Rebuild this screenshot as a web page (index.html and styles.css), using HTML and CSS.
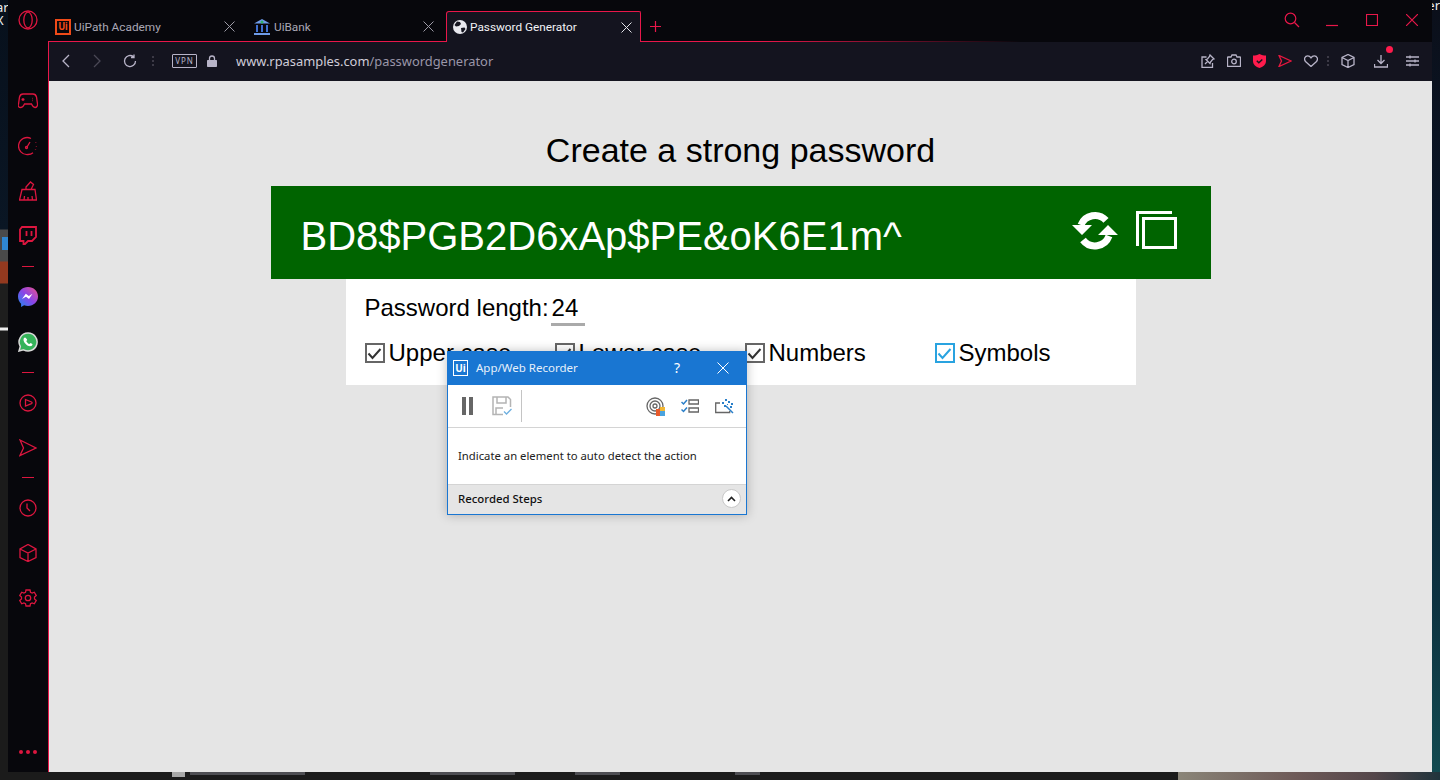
FILE: index.html
```html
<!DOCTYPE html>
<html>
<head>
    <title>Password Generator</title>
    <link rel="stylesheet" href="styles.css">
</head>
<body>
    <span class="desk-text desk-left">ar<br>X</span>
    <span class="desk-text desk-right">er</span>
    <i class="desk-tile"></i>

    <div class="window">
        <div class="side">
            <div class="side-logo">
                <svg width="20" height="20" viewBox="0 0 20 20" fill="none" stroke="#e8173f" stroke-width="1.300"><circle cx="10" cy="10" r="9"/><ellipse cx="10" cy="10" rx="4.200" ry="7.800"/></svg>
            </div>
            <div class="side-item"><svg width="20" height="16" viewBox="0 0 20 16"><path d="M5 1h10c2 0 3 1 3.500 3l1 7c.3 2-1 3.500-2.500 3.500-1.500 0-2.500-1.500-3.500-3.500H6.500C5.500 13 4.500 14.500 3 14.500.5 14.500-.3 13 .5 11l1-7C2 2 3 1 5 1z"/><path d="M5 5v3M3.500 6.500h3M14 5.500h.5M14 7.500h.5"/></svg></div>
            <div class="side-item"><svg width="20" height="20" viewBox="0 0 20 20"><path d="M13 2.500A8.500 8.500 0 1 0 10 18.500c2 0 3.500-.5 5-1.700"/><path d="M9 11l3-5M18.400 10v.5M17.800 6.500v.5M17.500 13v.5"/><circle cx="8.500" cy="11.500" r="1"/></svg></div>
            <div class="side-item"><svg width="18" height="20" viewBox="0 0 18 20"><path d="M3 8.500h13l1.500 10.500H.5zM7 8.500V6L11.500 1l3 2.500L12 8.500M5 19l.5-4M9 19v-3M13.500 19l-.5-4"/></svg></div>
            <div class="side-item"><svg width="18" height="20" viewBox="0 0 18 20"><path stroke-width="1.800" d="M3 1h14v10l-4 4H9l-3 3H4.500v-3H1V3.500zM7.500 5v5M12.500 5v5"/></svg></div>
            <div class="side-rule"></div>
            <div class="side-item">
                <svg width="20" height="20" viewBox="0 0 20 20"><defs><linearGradient id="msg" x1="0" y1="1" x2="1" y2="0"><stop offset="0" stop-color="#1a8cf0"/><stop offset=".5" stop-color="#8a45e8"/><stop offset="1" stop-color="#f0508a"/></linearGradient></defs><path fill="url(#msg)" stroke="none" d="M10 0C4.400 0 0 4.100 0 9.600c0 2.900 1.200 5.400 3.100 7.100V20l3-1.700c1.200.4 2.500.6 3.900.6 5.600 0 10-4 10-9.400S15.600 0 10 0z"/><path fill="#fff" stroke="none" d="M4 12l3.800-5.200 3 2.300 3.700-2.300L11 12 8 9.800z"/></svg>
            </div>
            <div class="side-item">
                <svg width="20" height="20" viewBox="0 0 20 20"><path fill="#35b35a" stroke="#d8d8d8" stroke-width="1.500" d="M10 1a9 9 0 0 0-7.700 13.500L1 19l4.600-1.200A9 9 0 1 0 10 1z"/><path fill="#fff" stroke="none" d="M7 5.500c-.5 0-1.500.8-1.500 2.300 0 2.800 3.800 6.500 6.500 6.500 1.500 0 2.500-1 2.500-2 0-.3-1.700-1.200-2-1.200s-.8 1-1.200 1c-.8 0-3-2.200-3-3 0-.4.900-.8.900-1.200S7.500 5.500 7 5.500z"/></svg>
            </div>
            <div class="side-rule"></div>
            <div class="side-item"><svg width="18" height="18" viewBox="0 0 18 18"><circle cx="9" cy="9" r="8"/><path d="M6.500 5.500l6 2.500c.8.400.8 1.200 0 1.600l-6 2.400z"/></svg></div>
            <div class="side-item"><svg width="18" height="18" viewBox="0 0 18 18"><path d="M1 1l16 8-16 7.500L4.500 9z"/></svg></div>
            <div class="side-rule side-rule-short"></div>
            <div class="side-item"><svg width="18" height="18" viewBox="0 0 18 18"><circle cx="9" cy="9" r="8"/><path d="M8 4.500V9l3 3"/></svg></div>
            <div class="side-item"><svg width="18" height="18" viewBox="0 0 18 18"><path d="M9 .5l8 4.500v8.500L9 17.500l-8-4V5zM1 5l8 4 8-4M9 9v8.500"/></svg></div>
            <div class="side-item"><svg width="18" height="18" viewBox="0 0 18 18"><path d="M7 1h4l.5 2.300 1.600.8 2.200-.9 2 3.400-1.800 1.500v1.800l1.800 1.500-2 3.400-2.200-.9-1.600.8L11 17H7l-.5-2.300-1.600-.8-2.200.9-2-3.400 1.800-1.500V8.100L.7 6.600l2-3.400 2.200.9 1.600-.8z"/><circle cx="9" cy="9" r="2.700"/></svg></div>
            <div class="side-dots"><i></i><i></i><i></i></div>
        </div>

        <div class="main">
            <div class="tabstrip">
                <div class="tab">
                    <span class="fav-ui">Ui</span>
                    <span class="tab-title">UiPath Academy</span>
                    <svg class="tab-x" width="11" height="11" viewBox="0 0 11 11"><path d="M.5.500l10 10M10.500.500l-10 10"/></svg>
                </div>
                <div class="tab">
                    <svg class="fav" width="18" height="16" viewBox="0 0 18 16"><path fill="#6f9be8" d="M9 0l8 4.500H1zM1 14h16v2H1z"/><path fill="#3f6fd0" d="M3 6h2v7H3zM8 6h2v7H8zM13 6h2v7h-2z"/><circle cx="9" cy="3" r="1.500" fill="#2fb26a"/></svg>
                    <span class="tab-title">UiBank</span>
                    <svg class="tab-x" width="11" height="11" viewBox="0 0 11 11"><path d="M.5.500l10 10M10.500.500l-10 10"/></svg>
                </div>
                <div class="tab tab-active">
                    <svg class="fav" width="14" height="14" viewBox="0 0 14 14"><circle cx="7" cy="7" r="7" fill="#e8e8ee"/><path fill="#14141f" d="M4 1.500l3 .5 1 2-2 2-3 .5-1.500-1.500zM8 8l3.500-.5 1 1.500-2.500 3.500-1.500-.5z"/></svg>
                    <span class="tab-title">Password Generator</span>
                    <svg class="tab-x" width="11" height="11" viewBox="0 0 11 11"><path d="M.5.500l10 10M10.500.500l-10 10"/></svg>
                </div>
                <div class="strip-rest">
                    <svg class="tab-plus" width="11" height="11" viewBox="0 0 11 11"><path d="M5.500 0v11M0 5.500h11"/></svg>
                    <div class="win-controls">
                        <div class="win-btn"><svg width="16" height="16" viewBox="0 0 16 16"><circle cx="6.500" cy="6.500" r="5.300"/><path d="M10.500 10.500L15 15"/></svg></div>
                        <div class="win-btn"><svg width="12" height="16" viewBox="0 0 12 16"><path d="M0 13.500h12"/></svg></div>
                        <div class="win-btn"><svg width="12" height="12" viewBox="0 0 12 12"><path d="M.5.500h11v11H.5z"/></svg></div>
                        <div class="win-btn"><svg width="12" height="12" viewBox="0 0 12 12"><path d="M0 0l12 12M12 0L0 12"/></svg></div>
                    </div>
                </div>
            </div>

            <div class="toolbar">
                <svg class="nav-back" width="9" height="14" viewBox="0 0 9 14"><path d="M8 1L2 7l6 6"/></svg>
                <svg class="nav-forward" width="9" height="14" viewBox="0 0 9 14"><path d="M1 1l6 6-6 6"/></svg>
                <svg class="nav-reload" width="14" height="14" viewBox="0 0 14 14"><path d="M12.500 7A5.500 5.500 0 1 1 10.500 2.800M11 .5v3H8"/></svg>
                <span class="tool-dots"><i></i><i></i><i></i></span>
                <span class="vpn">VPN</span>
                <svg class="lock" width="10" height="12" viewBox="0 0 10 12"><path class="solid" d="M1 5h8c.6 0 1 .4 1 1v5c0 .6-.4 1-1 1H1c-.6 0-1-.4-1-1V6c0-.6.4-1 1-1z"/><path d="M2.500 5V3.500a2.500 2.500 0 0 1 5 0V5"/></svg>
                <span class="url"><b>www.rpasamples.com</b>/passwordgenerator</span>
                <div class="tool-right">
                    <svg width="14" height="14" viewBox="0 0 14 14"><path d="M5.500 3H1v10.500h10.500V9M9 1l4 4-1.500.5L9.500 8 9 9.500 5 5.500 6.500 5 8.500 2.500zM6.500 7.500L4 10"/></svg>
                    <svg width="14" height="13" viewBox="0 0 14 13"><path d="M1 3h3l1-2h4l1 2h3c.3 0 .5.200.500.500v8.500c0 .3-.2.500-.5.500H1c-.3 0-.5-.2-.5-.5V3.500c0-.3.200-.5.500-.5z"/><circle cx="7" cy="7.500" r="2.300"/></svg>
                    <svg width="13" height="14" viewBox="0 0 13 14"><path fill="#ff1b4c" stroke="none" d="M6.500 0C9 1 10.500 1.500 13 1.500V7c0 3.500-3 6-6.500 7C3 13 0 10.500 0 7V1.500C2.500 1.500 4 1 6.500 0z"/><path stroke="#14141f" stroke-width="1.500" d="M3.800 6.800l2 2 3.500-3.300"/></svg>
                    <svg width="14" height="12" viewBox="0 0 14 12"><path stroke="#e8173f" d="M1 .5l12 5.500-12 5.500L3.500 6z"/></svg>
                    <svg width="14" height="12" viewBox="0 0 14 12"><path d="M7 11.500L1.500 6.500C-.5 4 1 .8 3.700.8 5 .8 6.200 1.500 7 2.800 7.800 1.500 9 .8 10.300.8 13 .8 14.500 4 12.500 6.500z"/></svg>
                    <span class="tool-dots tool-dots-right"><i></i><i></i><i></i></span>
                    <svg width="14" height="14" viewBox="0 0 14 14"><path d="M7 .5l6 3v7l-6 3-6-3v-7zM1 3.500l6 3 6-3M7 6.500v7"/></svg>
                    <span class="tool-dl">
                        <svg width="14" height="14" viewBox="0 0 14 14"><path d="M7 1v8M3.500 6L7 9.500 10.500 6M.5 10v3h13v-3"/></svg>
                        <i class="badge"></i>
                    </span>
                    <svg width="13" height="12" viewBox="0 0 13 12"><path d="M0 2h13M0 6h13M0 10h13M4 .5v3M9 4.500v3M4 8.500v3"/></svg>
                </div>
            </div>

            <div class="content">
                <h1>Create a strong password</h1>
                <div class="password-bar">
                    <span class="password">BD8$PGB2D6xAp$PE&amp;oK6E1m^</span>
                    <svg class="icon-refresh" width="46" height="40" viewBox="0 0 46 40"><path fill="none" stroke="#fff" stroke-width="7" d="M9 14A15 15 0 0 1 34 9.300M37 25A15 15 0 0 1 11 29"/><path fill="#fff" d="M0 14h20L10 24zM26 24h20L36 14z"/></svg>
                    <svg class="icon-copy" width="41" height="38" viewBox="0 0 41 38"><path fill="none" stroke="#fff" stroke-width="3" d="M36 1.500H1.500V35"/><path fill="none" stroke="#fff" stroke-width="3" d="M7.500 7.500h32v29h-32z"/></svg>
                </div>
                <div class="options">
                    <div class="length-row">
                        <span>Password length:</span>
                        <span class="length-value">24</span>
                    </div>
                    <div class="check-row">
                        <label class="check"><span class="box"><svg width="15" height="15" viewBox="0 0 15 15"><path d="M1.500 7.500l4 4.500 8-9"/></svg></span>Upper case</label>
                        <label class="check"><span class="box"><svg width="15" height="15" viewBox="0 0 15 15"><path d="M1.500 7.500l4 4.500 8-9"/></svg></span>Lower case</label>
                        <label class="check"><span class="box"><svg width="15" height="15" viewBox="0 0 15 15"><path d="M1.500 7.500l4 4.500 8-9"/></svg></span>Numbers</label>
                        <label class="check check-focus"><span class="box"><svg width="15" height="15" viewBox="0 0 15 15"><path d="M1.500 7.500l4 4.500 8-9"/></svg></span>Symbols</label>
                    </div>
                </div>

                <div class="recorder">
                    <div class="rec-title">
                        <span class="rec-logo">Ui</span>
                        <span class="rec-name">App/Web Recorder</span>
                        <span class="rec-help">?</span>
                        <svg class="rec-close" width="12" height="12" viewBox="0 0 12 12"><path d="M.5.500l11 11M11.500.500l-11 11"/></svg>
                    </div>
                    <div class="rec-tools">
                        <span class="rec-pause"><i></i><i></i></span>
                        <svg class="rec-save" width="20" height="20" viewBox="0 0 20 20"><path fill="none" stroke="#b4b4b4" stroke-width="1.500" d="M11 18.500H1V1h15l2.500 2.500V11M5 1v6h9V1M4 18.500V12h7"/><path fill="none" stroke="#6fb0e0" stroke-width="1.300" d="M12 15.500l2.500 2.500 5-5"/></svg>
                        <span class="rec-sep"></span>
                        <svg class="rec-target" width="19" height="19" viewBox="0 0 19 19"><circle cx="9" cy="9" r="8" fill="none" stroke="#666" stroke-width="1.300"/><circle cx="9" cy="9" r="5" fill="none" stroke="#666" stroke-width="1.300"/><circle cx="9" cy="9" r="2" fill="none" stroke="#666" stroke-width="1.300"/><path fill="#e85a2a" d="M10 12h4v7h-4z"/><path fill="#f2b632" d="M14 10h5v4h-5z"/><path fill="#4aa3df" d="M14 14h5v5h-5z"/></svg>
                        <svg class="rec-list" width="18" height="14" viewBox="0 0 18 14"><path fill="none" stroke="#2a7fc9" stroke-width="1.500" d="M.5 3l2 2 3.500-4M.5 10.500l2 2 3.500-4"/><path fill="none" stroke="#666" stroke-width="1.300" d="M8 1h9.500v4H8zM8 9h9.500v4H8z"/></svg>
                        <svg class="rec-scan" width="19" height="15" viewBox="0 0 19 15"><path fill="none" stroke="#666" stroke-width="1.300" d="M5 4H.7v9.500h14V12"/><path fill="none" stroke="#2a7fc9" stroke-width="1.500" d="M11 7l7 7"/><path fill="#2a7fc9" d="M7 3h2v2H7zM10 0h2v2h-2zM13 2h2v2h-2zM16 4h2v2h-2zM9 6h2v2H9zM12 5h1v1h-1zM15 7h2v2h-2z"/></svg>
                    </div>
                    <div class="rec-message">Indicate an element to auto detect the action</div>
                    <div class="rec-footer">
                        <span class="rec-steps">Recorded Steps</span>
                        <span class="rec-toggle"><svg width="9" height="6" viewBox="0 0 9 6"><path d="M1 5l3.500-3.500L8 5"/></svg></span>
                    </div>
                </div>
            </div>
        </div>
    </div>

    <div class="taskbar">
        <i class="task-bit task-icon"></i>
        <i class="task-bit task-name"></i>
        <i class="task-bit task-date"></i>
        <i class="task-bit task-type"></i>
        <i class="task-bit task-size"></i>
        <div class="task-photo"></div>
    </div>
</body>
</html>
```

FILE: styles.css
```css
* {
    box-sizing: border-box;
}

body {
    margin: 0;
    height: 780px;
    overflow: hidden;
    padding: 0 8px;
    font-family: 'Liberation Sans', Arial, sans-serif;
    background-color: #1b1b1b;
    background-image:
        linear-gradient(to bottom, #07101c 0, #0a1624 229px, #4a4a4a 230px, #4a4a4a 261px, #93391f 262px, #93391f 283px, #1e1e1e 284px, #1e1e1e 327px, #eee 328px, #eee 330px, #1b1b1b 331px),
        linear-gradient(to bottom, #0b0f1a 0, #0a1a2c 300px, #0d3240 600px, #124a50 772px);
    background-size: 8px 100%, 8px 772px;
    background-position: left top, right top;
    background-repeat: no-repeat;
}

.desk-text {
    position: absolute;
    color: #eee;
    font-family: 'Noto Sans', sans-serif;
    font-size: 13px;
    line-height: 13px;
}

.desk-left {
    left: -4px;
    top: 1px;
}

.desk-right {
    right: 0;
    top: -1px;
}

.desk-tile {
    position: absolute;
    left: 2px;
    top: 237px;
    width: 6px;
    height: 13px;
    background-color: #2f86d0;
}

.window {
    position: relative;
    display: flex;
    height: 772px;
    background-color: #07070c;
    font-family: 'Noto Sans', sans-serif;
}

/* left sidebar */
.side {
    width: 40px;
    flex: none;
    display: flex;
    flex-direction: column;
    align-items: center;
    padding-bottom: 18px;
}

.side svg {
    display: block;
    fill: none;
    stroke: #dc163f;
    stroke-width: 1.3;
}

.side-logo {
    height: 41px;
    padding-top: 10px;
    margin-bottom: 37px;
}

.side-item {
    height: 45px;
    flex: none;
    display: flex;
    align-items: center;
    justify-content: center;
}

.side-rule {
    flex: none;
    width: 12px;
    height: 16px;
    background: linear-gradient(#dc163f, #dc163f) center / 12px 1px no-repeat;
}

.side-rule-short {
    height: 15px;
}

.side-dots {
    margin-top: auto;
    display: flex;
    gap: 3px;
}

.side-dots i {
    width: 4px;
    height: 4px;
    border-radius: 50%;
    background-color: #dc163f;
}

.main {
    flex: 1;
    min-width: 0;
    display: flex;
    flex-direction: column;
}

/* tabs */
.tab {
    width: 199px;
    height: 31px;
    padding: 0 12px 0 7px;
    display: flex;
    align-items: center;
    border-top: 1px solid transparent;
    border-bottom: 1px solid #e8174a;
    color: #aaa7b5;
    font-family: Roboto, sans-serif;
    font-size: 11.8px;
}

.tabstrip {
    height: 42px;
    flex: none;
    display: flex;
    align-items: flex-end;
}

.tab:nth-child(2) {
    padding-left: 6px;
}

.tab-active {
    width: 195px;
    padding: 0 8px 0 6px;
    background-color: #14141f;
    border: 1px solid #e8174a;
    border-bottom: none;
    border-radius: 3px 2px 0 0;
    color: #f2f2f6;
}

.fav-ui {
    width: 16px;
    height: 16px;
    flex: none;
    border: 2px solid #f04a18;
    color: #f04a18;
    font-size: 10px;
    font-weight: 700;
    line-height: 12px;
    text-align: center;
}

.fav {
    flex: none;
}

.tab-title {
    margin-left: 3px;
    white-space: nowrap;
}

.tab-active .tab-title {
    margin-left: 3px;
}

.tab-x {
    margin-left: auto;
    flex: none;
    stroke: #9c9aa6;
    stroke-width: 1;
}

.tab-active .tab-x {
    stroke: #e4e4ea;
}

.strip-rest {
    flex: 1;
    align-self: stretch;
    display: flex;
    background: linear-gradient(to right, #e8174a 0, #e8174a 120px, rgba(232, 23, 74, 0) 380px) left bottom / 100% 1px no-repeat;
}

.tab-plus {
    margin: 21px 0 0 9px;
    stroke: #e8174a;
    stroke-width: 1.2;
}

.win-controls {
    margin-left: auto;
    display: flex;
    height: 40px;
}

.win-btn {
    width: 40px;
    display: flex;
    align-items: center;
    justify-content: center;
}

.win-btn svg {
    fill: none;
    stroke: #e8174a;
    stroke-width: 1.2;
}

/* address bar */
.toolbar {
    height: 39px;
    flex: none;
    display: flex;
    align-items: center;
    background-color: #14141f;
    border-left: 1px solid #e8174a;
    padding: 0 13px 2px 0;
}

.toolbar svg {
    flex: none;
    fill: none;
    stroke: #b8b4c8;
    stroke-width: 1.3;
}

.toolbar svg .solid {
    fill: #b8b4c8;
    stroke: none;
}

.nav-back {
    margin-left: 12px;
}

.toolbar .nav-forward {
    margin-left: 23px;
    stroke: #4a4855;
}

.nav-reload {
    margin-left: 21px;
}

.tool-dots {
    display: flex;
    flex-direction: column;
    gap: 2px;
    margin-left: 15px;
}

.tool-dots i {
    width: 2px;
    height: 2px;
    background-color: #3c3a46;
}

.tool-dots-right {
    margin: 0 0 0 -3px;
}

.vpn {
    margin-left: 18px;
    width: 25px;
    height: 14px;
    border: 1px solid #b8b4c8;
    border-radius: 1px;
    color: #b8b4c8;
    font-size: 8px;
    letter-spacing: 1px;
    line-height: 12px;
    text-align: center;
}

.lock {
    margin-left: 10px;
}

.url {
    margin-left: 19px;
    color: #9a96a8;
    font-size: 12.9px;
    white-space: nowrap;
}

.url b {
    font-weight: 400;
    color: #cfccd8;
}

.tool-right {
    margin-left: auto;
    display: flex;
    align-items: center;
    gap: 12px;
}

.tool-dl {
    position: relative;
    display: flex;
    margin: 0 6px 0 7px;
}

.badge {
    position: absolute;
    right: -5px;
    top: -8px;
    width: 7px;
    height: 7px;
    border-radius: 50%;
    background-color: #ff1b4c;
}

/* page */
.content {
    flex: 1;
    position: relative;
    display: flex;
    flex-direction: column;
    align-items: center;
    padding-top: 48px;
    background-color: #e5e5e5;
    border-left: 1px solid #e8174a;
    font-family: 'Liberation Sans', Arial, sans-serif;
    color: #000;
}

h1 {
    margin: 0 0 15px;
    font-size: 34px;
    font-weight: 400;
    line-height: 42px;
}

.password-bar {
    width: 940px;
    height: 93px;
    flex: none;
    display: flex;
    align-items: center;
    padding: 0 34px 0 30px;
    background-color: #006400;
    color: #fff;
}

.password {
    margin-top: 8px;
    font-size: 40px;
}

.icon-refresh {
    margin-left: auto;
    margin-top: -3px;
}

.icon-copy {
    margin-left: 18px;
    margin-top: -5px;
}

.options {
    width: 790px;
    height: 106px;
    flex: none;
    padding: 14px 0 0 19px;
    background-color: #fff;
    font-size: 24px;
}

.length-row {
    display: flex;
    gap: 2px;
    height: 33px;
    line-height: 29px;
}

.length-value {
    width: 34px;
    height: 33px;
    padding-left: 1px;
    border-bottom: 3px solid #aaa;
}

.check-row {
    display: grid;
    grid-template-columns: repeat(4, 190px);
    margin-top: 13px;
}

.check {
    display: flex;
    align-items: center;
    gap: 4px;
    height: 28px;
    white-space: nowrap;
}

.box {
    width: 20px;
    height: 20px;
    flex: none;
    display: flex;
    align-items: center;
    justify-content: center;
    border: 2px solid #666;
}

.box svg {
    fill: none;
    stroke: #333;
    stroke-width: 2;
}

.check-focus .box {
    border-color: #29a3e0;
}

.check-focus .box svg {
    stroke: #29a3e0;
}

/* recorder popup */
.recorder {
    position: absolute;
    left: 398px;
    top: 270px;
    width: 300px;
    height: 164px;
    display: flex;
    flex-direction: column;
    border: 1px solid #1976d2;
    background-color: #fff;
    box-shadow: 0 0 10px rgba(0, 0, 0, .25);
    font-family: 'Noto Sans', sans-serif;
    font-size: 11.5px;
}

.rec-title {
    height: 33px;
    flex: none;
    display: flex;
    align-items: center;
    padding: 0 17px 2px 5px;
    background-color: #1976d2;
    color: #fff;
}

.rec-logo {
    width: 15px;
    height: 16px;
    flex: none;
    border: 1px solid #fff;
    font-size: 10px;
    font-weight: 700;
    line-height: 14px;
    text-align: center;
}

.rec-name {
    margin-left: 8px;
    color: #e6f0fa;
}

.rec-help {
    margin-left: auto;
    margin-right: 37px;
    font-size: 14px;
}

.rec-close {
    flex: none;
    fill: none;
    stroke: #fff;
    stroke-width: 1;
}

.rec-tools {
    height: 43px;
    flex: none;
    display: flex;
    align-items: center;
    padding: 0 12px 0 14px;
    border-bottom: 1px solid #d4d4d4;
}

.rec-tools svg {
    flex: none;
}

.rec-pause {
    display: flex;
    gap: 3px;
}

.rec-pause i {
    width: 4px;
    height: 18px;
    background-color: #666;
}

.rec-save {
    margin-left: 19px;
}

.rec-sep {
    width: 1px;
    height: 32px;
    margin-left: 9px;
    background-color: #c4c4c4;
}

.rec-target {
    margin-left: auto;
}

.rec-list {
    margin-left: 16px;
}

.rec-scan {
    margin-left: 16px;
}

.rec-message {
    flex: 1;
    padding: 20px 10px 0;
    color: #222;
    font-size: 11.3px;
}

.rec-footer {
    height: 30px;
    flex: none;
    display: flex;
    align-items: center;
    justify-content: space-between;
    padding: 0 5px 2px 10px;
    background-color: #e5e5e5;
    border-top: 1px solid #d4d4d4;
}

.rec-steps {
    color: #111;
    font-size: 11.4px;
    font-weight: 500;
}

.rec-toggle {
    width: 19px;
    height: 19px;
    display: flex;
    align-items: center;
    justify-content: center;
    border: 1px solid #c8c8c8;
    border-radius: 50%;
    background-color: #fff;
}

.rec-toggle svg {
    fill: none;
    stroke: #222;
    stroke-width: 1.6;
}

/* bit of the desktop under the window */
.taskbar {
    height: 8px;
    margin: 0 -8px;
    display: flex;
    background-color: #1b1b1b;
}

.task-bit {
    height: 3px;
    flex: none;
    opacity: .45;
    background-color: #8d8d99;
}

.task-icon {
    width: 13px;
    margin-left: 172px;
    height: 5px;
    opacity: .8;
    background-color: #ccc;
}

.task-name {
    width: 115px;
    margin-left: 5px;
}

.task-date {
    width: 85px;
    margin-left: 125px;
}

.task-type {
    width: 45px;
    margin-left: 60px;
}

.task-size {
    width: 25px;
    margin-left: 115px;
}

.task-photo {
    margin-left: auto;
    width: 262px;
    background: linear-gradient(to right, #8a8578, #6e5a58 45%, #54464a 75%, #20343c);
}
```
